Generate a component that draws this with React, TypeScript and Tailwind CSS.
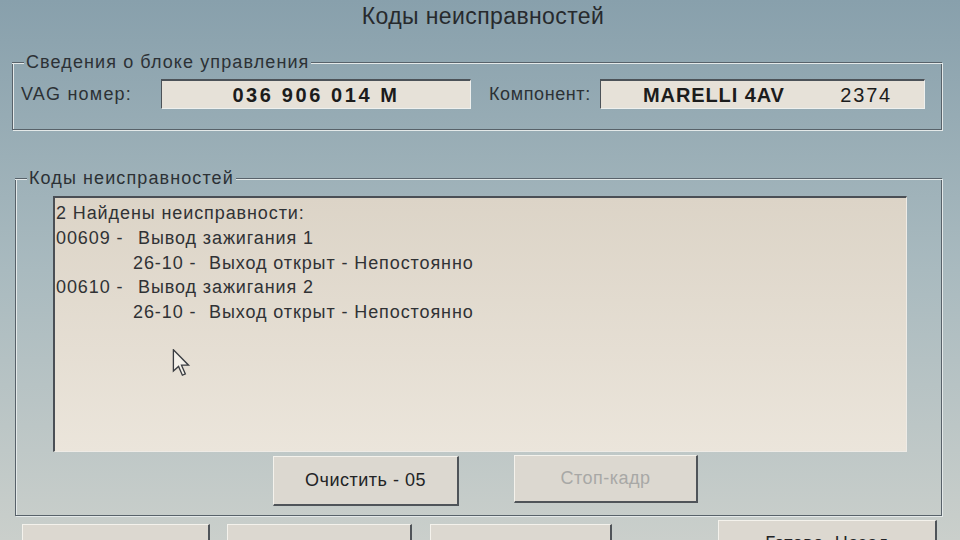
import type { ReactNode } from 'react';

const faults = [
  { code: '00609', name: 'Вывод зажигания 1', sub: '26-10', text: 'Выход открыт - Непостоянно' },
  { code: '00610', name: 'Вывод зажигания 2', sub: '26-10', text: 'Выход открыт - Непостоянно' },
];

function Group({ title, className, children }: { title: string; className: string; children: ReactNode }) {
  return (
    <div className={className}>
      <div className="-mb-[10px] flex h-5 items-start">
        <div className="mt-[10px] h-[2px] w-[12px] border-t border-b border-t-[#58626a] border-b-[#e4e9e9]" />
        <span className="px-[2px] text-[18px] leading-5 tracking-[1.1px] text-[#2c3135]">{title}</span>
        <div className="mt-[10px] h-[2px] flex-1 border-t border-b border-t-[#58626a] border-b-[#e4e9e9]" />
      </div>
      <div className="border-r border-b border-l border-[#58626a] shadow-[inset_1px_0_0_#e4e9e9,1px_1px_0_#e4e9e9]">
        {children}
      </div>
    </div>
  );
}

function Field({ className, children }: { className: string; children: ReactNode }) {
  return (
    <div
      className={`h-[30px] border-t-2 border-l border-t-[#4c5258] border-l-[#4c5258] border-r border-b border-r-[#eef0ee] border-b-[#eef0ee] bg-[#e6e1d8] ${className}`}
    >
      {children}
    </div>
  );
}

function Button({ label, disabled, className }: { label: string; disabled?: boolean; className: string }) {
  return (
    <div
      className={`flex justify-center border-t border-l border-t-[#f4f2ec] border-l-[#f4f2ec] border-r-2 border-b-2 border-r-[#4f5459] border-b-[#4f5459] bg-[#dcd8d0] text-[18px] tracking-[0.5px] ${
        disabled ? 'text-[#a8a8a6]' : 'text-[#222426]'
      } ${className}`}
    >
      {label}
    </div>
  );
}

export default function App() {
  return (
    <div className="h-[540px] w-[960px] overflow-hidden bg-linear-to-b from-[#88a0ac] via-[#a9babf] to-[#cacfcb] font-['Liberation_Sans',Arial,sans-serif]">
      <div className="flex h-[32px] items-center justify-center pl-[6px] text-[23px] tracking-[0.4px] text-[#272a2d]">
        Коды неисправностей
      </div>

      <Group title="Сведения о блоке управления" className="mt-[20px] mr-[18px] ml-[12px]">
        <div className="flex items-center pt-[17px] pr-[16px] pb-[20px] pl-[8px]">
          <span className="w-[140px] text-[18px] tracking-[1.2px] text-[#2c3135]">VAG номер:</span>
          <Field className="flex w-[310px] items-center justify-center">
            <span className="text-[20px] font-bold tracking-[2.6px] text-[#1c1c1c]">036 906 014 M</span>
          </Field>
          <span className="ml-[18px] w-[111px] text-[18px] tracking-[0.6px] text-[#2c3135]">Компонент:</span>
          <Field className="flex flex-1 items-center justify-between pr-[32px] pl-[42px]">
            <span className="text-[20px] font-bold tracking-[0.9px] text-[#1c1c1c]">MARELLI 4AV</span>
            <span className="text-[20px] tracking-[1.8px] text-[#1c1c1c]">2374</span>
          </Field>
        </div>
      </Group>

      <Group title="Коды неисправностей" className="mt-[38px] mr-[18px] ml-[15px]">
        <div className="pt-[18px] pr-[34px] pb-[9px] pl-[37px]">
          <div className="relative h-[256px] border-t-2 border-l-2 border-t-[#4a4f55] border-l-[#4a4f55] border-r border-b border-r-[#eeebe6] border-b-[#eeebe6] bg-linear-to-b from-[#dcd4c7] to-[#ebe5db] pt-[3px] pl-[1px] text-[18px] leading-[24.8px] tracking-[0.9px] text-[#303235]">
            <div>2 Найдены неисправности:</div>
            {faults.map((f) => (
              <div key={f.code}>
                <div className="flex">
                  <span className="w-[82px]">{f.code} -</span>
                  <span>{f.name}</span>
                </div>
                <div className="flex pl-[77px]">
                  <span className="w-[76px]">{f.sub} -</span>
                  <span>{f.text}</span>
                </div>
              </div>
            ))}
            <svg className="absolute top-[151px] left-[117px]" width="19" height="28" viewBox="0 0 12 19">
              <path
                d="M0.5 0.5 L0.5 15 L4 11.8 L6.6 17.8 L8.6 16.9 L6 11 L10.8 11 Z"
                fill="#f4f1ea"
                stroke="#3a3d42"
                strokeWidth="0.9"
                strokeLinejoin="miter"
              />
            </svg>
          </div>
          <div className="mt-[4px] flex items-start gap-[55px] pl-[220px]">
            <Button label="Очистить - 05" className="h-[50px] w-[186px] items-center" />
            <Button label="Стоп-кадр" disabled className="-mt-px h-[48px] w-[184px] items-center" />
          </div>
        </div>
      </Group>

      <div className="mt-[8px] flex pr-[23px] pl-[22px]">
        <Button label="" className="h-[40px] w-[188px]" />
        <Button label="" className="ml-[17px] h-[40px] w-[185px]" />
        <Button label="" className="ml-[18px] h-[40px] w-[182px]" />
        <Button label="Готово, Назад" className="-mt-[4px] ml-auto h-[44px] w-[219px] items-start pt-[9px]" />
      </div>
    </div>
  );
}
